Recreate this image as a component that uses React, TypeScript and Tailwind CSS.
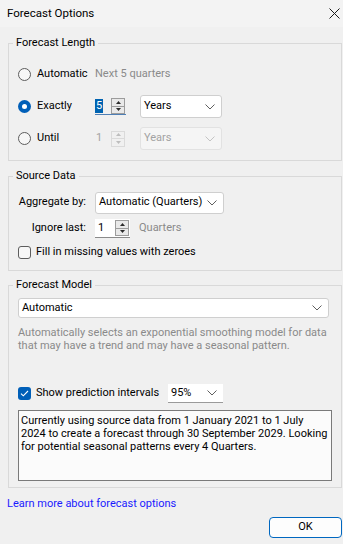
const font = "font-['Roboto','Liberation_Sans',sans-serif]"

function Chevron({ disabled = false }: { disabled?: boolean }) {
  return (
    <svg width="10" height="6" viewBox="0 0 10 6" className="shrink-0">
      <path d="M0.5 0.5 L5 5 L9.5 0.5" fill="none" stroke={disabled ? '#c4c4c4' : '#5f5f5f'} strokeWidth="1" />
    </svg>
  )
}

function Radio({ checked = false }: { checked?: boolean }) {
  if (checked)
    return (
      <span className="w-[13px] h-[13px] rounded-full bg-[#005fb8] flex items-center justify-center shrink-0">
        <span className="w-[5px] h-[5px] rounded-full bg-white" />
      </span>
    )
  return <span className="w-[13px] h-[13px] rounded-full border border-[#5d5d5d] bg-[#f7f7f7] shrink-0" />
}

function Checkbox({ checked = false }: { checked?: boolean }) {
  if (checked)
    return (
      <span className="w-[13px] h-[13px] rounded-[3px] bg-[#005fb8] flex items-center justify-center shrink-0">
        <svg width="9" height="7" viewBox="0 0 9 7">
          <path d="M1 3.6 L3.3 5.8 L8 1" fill="none" stroke="white" strokeWidth="1.1" />
        </svg>
      </span>
    )
  return <span className="w-[13px] h-[13px] rounded-[3px] border border-[#5d5d5d] bg-[#f7f7f7] shrink-0" />
}

function SpinButtons({ disabled = false }: { disabled?: boolean }) {
  const c = disabled ? '#bdbdbd' : '#2b2b2b'
  return (
    <span
      className={`w-[14px] h-[16px] flex flex-col border shrink-0 ${
        disabled ? 'border-[#dadada]' : 'border-[#9c9c9c] bg-[#e9e9e9]'
      }`}
    >
      <span className="flex-1 flex items-center justify-center">
        <svg width="5" height="3" viewBox="0 0 5 3">
          <path d="M0 3 L2.5 0 L5 3Z" fill={c} />
        </svg>
      </span>
      <span className={`h-px ${disabled ? 'bg-[#dadada]' : 'bg-[#9c9c9c]'}`} />
      <span className="flex-1 flex items-center justify-center">
        <svg width="5" height="3" viewBox="0 0 5 3">
          <path d="M0 0 L2.5 3 L5 0Z" fill={c} />
        </svg>
      </span>
    </span>
  )
}

function Select({ value, className, disabled = false }: { value: string; className: string; disabled?: boolean }) {
  return (
    <div
      className={`flex items-center justify-between pl-[3px] pr-[6px] rounded-[3px] border whitespace-nowrap ${
        disabled ? 'border-[#e2e2e2] bg-[#f5f5f5] text-[#a3a3a3]' : 'border-[#cfcfcf] bg-white text-black'
      } ${className}`}
    >
      <span>{value}</span>
      <Chevron disabled={disabled} />
    </div>
  )
}

function Group({ title, children, className = '' }: { title: string; children: React.ReactNode; className?: string }) {
  return (
    <fieldset className={`border border-[#d9d9d9] ${className}`}>
      <legend className="ml-[4px] px-[3px] leading-[16px]">{title}</legend>
      {children}
    </fieldset>
  )
}

export default function App() {
  return (
    <div className={`w-[343px] h-[544px] bg-[#f0f0f0] flex flex-col text-[11px] text-black whitespace-nowrap ${font}`}>
      <div className="h-[27px] bg-[#f3f3f3] flex items-center justify-between pl-[7px] pr-[3px] shrink-0">
        <span className="text-[11.5px]">Forecast Options</span>
        <svg width="11" height="11" viewBox="0 0 11 11">
          <path d="M0.5 0.5 L10.5 10.5 M10.5 0.5 L0.5 10.5" stroke="#1a1a1a" strokeWidth="1" />
        </svg>
      </div>

      <div className="flex flex-col pl-[8px] pr-[1px]">
        <Group title="Forecast Length" className="mt-[8px] pt-[12px] pb-[10px]">
          <div className="flex flex-col gap-[9px]">
            <div className="h-[23px] flex items-center pl-[9px]">
              <Radio />
              <span className="ml-[6px] w-[58px]">Automatic</span>
              <span className="text-[#8a8a8a]">Next 5 quarters</span>
            </div>
            <div className="h-[23px] flex items-center pl-[9px]">
              <Radio checked />
              <span className="ml-[6px] w-[58px]">Exactly</span>
              <div className="w-[31px] h-[17px] flex items-center border-b border-[#4f7fb5]">
                <span className="w-[16px] flex">
                  <span className="bg-[#0063b1] text-white leading-[14px] px-px">5</span>
                </span>
                <SpinButtons />
              </div>
              <Select value="Years" className="ml-[14px] w-[82px] h-[23px]" />
            </div>
            <div className="h-[23px] flex items-center pl-[9px]">
              <Radio />
              <span className="ml-[6px] w-[58px]">Until</span>
              <div className="w-[31px] h-[17px] flex items-center">
                <span className="w-[16px] pl-px text-[#a3a3a3]">1</span>
                <SpinButtons disabled />
              </div>
              <Select value="Years" disabled className="ml-[14px] w-[82px] h-[23px]" />
            </div>
          </div>
        </Group>

        <Group title="Source Data" className="mt-[7px] pt-[7px] pb-[10px]">
          <div className="flex flex-col">
            <div className="h-[23px] flex items-center pl-[9px]">
              <span className="w-[68px] text-right">Aggregate by:</span>
              <Select value="Automatic (Quarters)" className="ml-[9px] w-[129px] h-[22px]" />
            </div>
            <div className="h-[21px] mt-[4px] flex items-center pl-[9px]">
              <span className="w-[68px] text-right">Ignore last:</span>
              <div className="ml-[9px] w-[35px] h-[19px] flex items-center border-b border-[#8a8a8a] bg-white">
                <span className="w-[20px] pl-[3px]">1</span>
                <SpinButtons />
              </div>
              <span className="ml-[9px] text-[#8a8a8a]">Quarters</span>
            </div>
            <div className="h-[16px] mt-[5px] flex items-center pl-[9px]">
              <Checkbox />
              <span className="ml-[5px]">Fill in missing values with zeroes</span>
            </div>
          </div>
        </Group>

        <Group title="Forecast Model" className="mt-[6px] pt-[5px] pb-[6px]">
          <div className="flex flex-col px-[9px]">
            <Select value="Automatic" className="w-[311px] h-[20px]" />
            <p className="mt-[8px] leading-[13px] text-[#8a8a8a]">
              Automatically selects an exponential smoothing model for data
              <br />
              that may have a trend and may have a seasonal pattern.
            </p>
            <div className="mt-[32px] flex items-center">
              <Checkbox checked />
              <span className="ml-[5px] w-[132px]">Show prediction intervals</span>
              <Select value="95%" className="w-[55px] h-[19px] rounded-none border-0 border-b border-b-[#9a9a9a] pl-[3px]" />
            </div>
            <div className="mt-[7px] h-[71px] border border-[#7a7a7a] bg-[#fbfbfb] px-[2px] pt-[3px] leading-[13px]">
              Currently using source data from 1 January 2021 to 1 July
              <br />
              2024 to create a forecast through 30 September 2029. Looking
              <br />
              for potential seasonal patterns every 4 Quarters.
            </div>
          </div>
        </Group>

        <div className="mt-[8px] -ml-[1px] text-[#1a1aff] leading-[16px]">Learn more about forecast options</div>

        <div className="mt-[5px] flex justify-end">
          <button className="w-[73px] h-[21px] rounded-[4px] border border-[#0067c0] bg-[#fdfdfd] text-black">OK</button>
        </div>
      </div>
    </div>
  )
}
